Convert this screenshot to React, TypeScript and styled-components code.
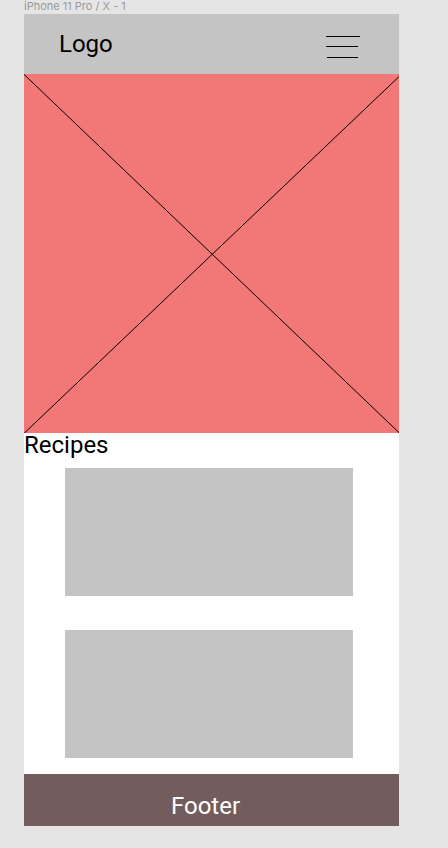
import React from "react";
import styled, { createGlobalStyle } from "styled-components";

const GlobalStyle = createGlobalStyle`
  * { box-sizing: border-box; }
  body {
    margin: 0;
    background: #e5e5e5;
    font-family: Roboto, sans-serif;
    color: #000;
  }
`;

const Canvas = styled.div`
  padding: 0 49px 22px 24px;
`;

const FrameLabel = styled.div`
  height: 14px;
  font-family: Inter, sans-serif;
  font-size: 11px;
  line-height: 13px;
  color: #999;
  white-space: nowrap;
`;

const Frame = styled.div`
  display: flex;
  flex-direction: column;
  background: #fff;
`;

const Header = styled.header`
  display: flex;
  align-items: center;
  justify-content: space-between;
  height: 60px;
  padding: 0 39px 0 35px;
  background: #c4c4c4;
`;

const Logo = styled.a`
  font-size: 24px;
  line-height: 28px;
  color: inherit;
  text-decoration: none;
`;

const MenuButton = styled.button`
  display: flex;
  padding: 6px 0 0;
  border: 0;
  background: none;
  cursor: pointer;
`;

const Hero = styled.section`
  display: flex;
  background: #f27777;

  svg {
    width: 100%;
    height: 359px;
  }
`;

const Heading = styled.h2`
  margin: 0;
  padding-bottom: 11px;
  font-size: 24px;
  font-weight: 400;
  line-height: 24px;
`;

const RecipeList = styled.div`
  display: grid;
  gap: 34px;
  padding: 0 46px 16px 41px;
`;

const RecipeCard = styled.article`
  height: 128px;
  background: #c4c4c4;
`;

const Footer = styled.footer`
  padding: 18px 12px 6px 0;
  background: #725c5c;
  color: #fff;
  font-size: 24px;
  line-height: 28px;
  text-align: center;
`;

export default function App() {
  return (
    <Canvas>
      <GlobalStyle />
      <FrameLabel>iPhone 11 Pro / X - 1</FrameLabel>
      <Frame>
        <Header>
          <Logo href="#">Logo</Logo>
          <MenuButton type="button" aria-label="Menu">
            <svg width="34" height="22" viewBox="0 0 34 22" stroke="#000" shapeRendering="crispEdges">
              <path d="M0 0.5H34M0 10.5H32M1 21.5H32" />
            </svg>
          </MenuButton>
        </Header>
        <Hero>
          <svg viewBox="0 0 375 359" preserveAspectRatio="none" stroke="#000" aria-hidden="true">
            <path d="M0 0.4L375 358.6M0 359.4L375 2.6" vectorEffect="non-scaling-stroke" />
          </svg>
        </Hero>
        <main>
          <Heading>Recipes</Heading>
          <RecipeList>
            <RecipeCard />
            <RecipeCard />
          </RecipeList>
        </main>
        <Footer>Footer</Footer>
      </Frame>
    </Canvas>
  );
}
